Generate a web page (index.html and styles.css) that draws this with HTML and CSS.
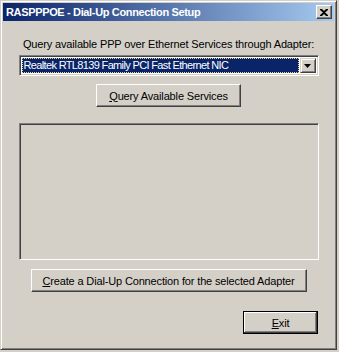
FILE: index.html
```html
<!DOCTYPE html>
<html lang="en">
<head>
    <meta charset="UTF-8" />
    <title>RASPPPOE - Dial-Up Connection Setup</title>
    <link rel="stylesheet" href="styles.css">
</head>
<body>
<div class="window">
    <div class="titlebar">
        <span class="titlebar__text">RASPPPOE - Dial-Up Connection Setup</span>
        <button class="titlebar__close" type="button">
            <svg width="8" height="7" viewBox="0 0 8 7">
                <path d="M0 0h2l2 2 2-2h2v1L5 3.5 8 6v1H6L4 5 2 7H0V6l3-2.5L0 1z" fill="#000"/>
            </svg>
        </button>
    </div>
    <div class="dialog">
        <p class="dialog__label">Query available PPP over Ethernet Services through Adapter:</p>
        <div class="combo">
            <div class="combo__value"><span>Realtek RTL8139 Family PCI Fast Ethernet NIC</span></div>
            <div class="combo__btn">
                <svg width="7" height="4" viewBox="0 0 7 4"><path d="M0 0h7L3.5 4z" fill="#000"/></svg>
            </div>
        </div>
        <button class="btn btn--query" type="button"><u>Q</u>uery Available Services</button>
        <div class="listbox"></div>
        <button class="btn btn--create" type="button"><u>C</u>reate a Dial-Up Connection for the selected Adapter</button>
        <div class="dialog__footer">
            <button class="btn btn--exit" type="button"><u>E</u>xit</button>
        </div>
    </div>
</div>
</body>
</html>
```

FILE: styles.css
```css
*,
*::before,
*::after {
    box-sizing: border-box;
}

html,
body {
    margin: 0;
    padding: 0;
}

body {
    background: #D4D0C8;
    font-family: 'Liberation Sans', Arial, sans-serif;
    font-size: 11px;
    color: #000;
}

.window {
    width: 337px;
    height: 350px;
    background: #D4D0C8;
    border: 1px solid;
    border-color: #D4D0C8 #404040 #404040 #D4D0C8;
    box-shadow: inset 1px 1px #fff, inset -1px -1px #808080;
    padding: 2px;
    display: flex;
    flex-direction: column;
}

.titlebar {
    height: 18px;
    background: linear-gradient(90deg, #0A246A 0%, #A6CAF0 100%);
    display: flex;
    align-items: center;
    justify-content: space-between;
    padding: 0 2px 0 2px;
}
.titlebar__text {
    color: #fff;
    font-weight: bold;
    font-size: 11px;
    letter-spacing: -0.35px;
    padding-left: 1px;
}
.titlebar__close {
    width: 16px;
    height: 14px;
    padding: 0;
    background: #D4D0C8;
    border: 1px solid;
    border-color: #fff #404040 #404040 #fff;
    box-shadow: inset -1px -1px #808080;
    display: flex;
    align-items: center;
    justify-content: center;
}

.dialog {
    flex: 1;
    display: flex;
    flex-direction: column;
    align-items: center;
}
.dialog__label {
    margin: 17px 0 0;
    line-height: 13px;
    text-align: center;
    letter-spacing: -0.15px;
}

.combo {
    margin-top: 4px;
    width: 300px;
    height: 21px;
    background: #fff;
    border: 1px solid;
    border-color: #808080 #fff #fff #808080;
    box-shadow: inset 1px 1px #404040, inset -1px -1px #D4D0C8;
    padding: 2px;
    display: flex;
}
.combo__value {
    flex: 1;
    background: #0A246A;
    color: #fff;
    outline: 1px dotted #E8D27A;
    outline-offset: -1px;
    padding-left: 2px;
    margin-right: 1px;
    line-height: 15px;
    font-size: 11px;
    letter-spacing: -0.65px;
}
.combo__btn {
    width: 16px;
    background: #D4D0C8;
    border: 1px solid;
    border-color: #D4D0C8 #404040 #404040 #D4D0C8;
    box-shadow: inset 1px 1px #fff, inset -1px -1px #808080;
    display: flex;
    align-items: center;
    justify-content: center;
}

.btn {
    font-family: inherit;
    font-size: 11px;
    letter-spacing: -0.15px;
    white-space: nowrap;
    color: #000;
    height: 23px;
    padding: 0;
    background: #D4D0C8;
    border: 1px solid;
    border-color: #fff #404040 #404040 #fff;
    box-shadow: inset -1px -1px #808080, inset 1px 1px #D4D0C8;
}
.btn--query {
    margin-top: 8px;
    width: 145px;
}
.btn--create {
    margin-top: 9px;
    width: 276px;
}

.listbox {
    margin-top: 16px;
    width: 300px;
    height: 137px;
    border: 1px solid;
    border-color: #808080 #fff #fff #808080;
    box-shadow: inset 1px 1px #404040, inset -1px -1px #D4D0C8;
}

.dialog__footer {
    align-self: stretch;
    display: flex;
    justify-content: flex-end;
    padding-right: 16px;
    margin-top: 19px;
}
.btn--exit {
    width: 75px;
    border-color: #000;
    box-shadow: inset -1px -1px #404040, inset 1px 1px #fff, inset -2px -2px #808080;
}
```
